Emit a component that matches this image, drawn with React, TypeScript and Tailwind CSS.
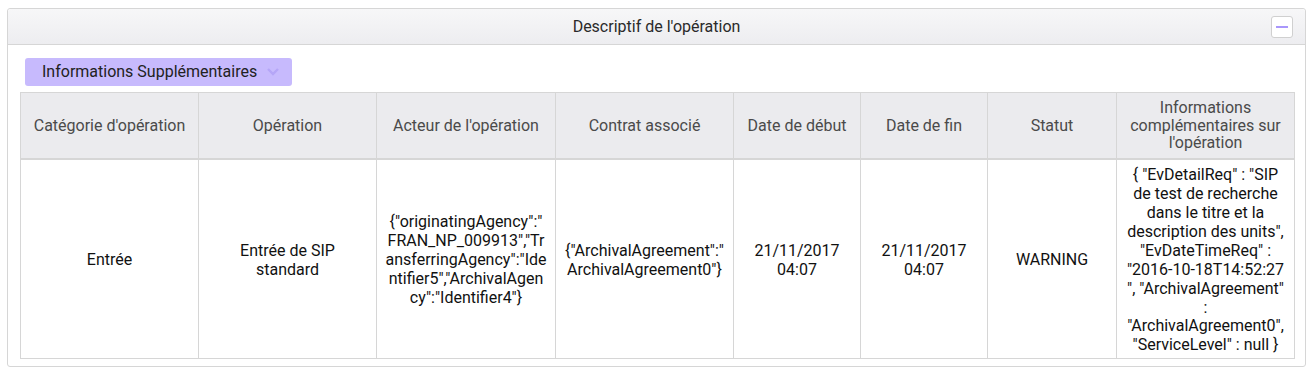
const headers = [
  "Catégorie d'opération",
  "Opération",
  "Acteur de l'opération",
  "Contrat associé",
  "Date de début",
  "Date de fin",
  "Statut",
  "Informations complémentaires sur l'opération",
]

const widths = ["w-[178px]", "w-[178px]", "w-[179px]", "w-[178px]", "w-[127px]", "w-[127px]", "w-[129px]", "w-[178px]"]

// Chaque cellule est découpée en lignes, comme dans la capture d'origine
const row: string[][] = [
  ["Entrée"],
  ["Entrée de SIP", "standard"],
  [
    '{"originatingAgency":"',
    'FRAN_NP_009913","Tr',
    'ansferringAgency":"Ide',
    'ntifier5","ArchivalAgen',
    'cy":"Identifier4"}',
  ],
  ['{"ArchivalAgreement":"', 'ArchivalAgreement0"}'],
  ["21/11/2017", "04:07"],
  ["21/11/2017", "04:07"],
  ["WARNING"],
  [
    '{ "EvDetailReq" : "SIP',
    "de test de recherche",
    "dans le titre et la",
    'description des units",',
    '"EvDateTimeReq" :',
    '"2016-10-18T14:52:27',
    '", "ArchivalAgreement"',
    ":",
    '"ArchivalAgreement0",',
    '"ServiceLevel" : null }',
  ],
]

export default function App() {
  return (
    <div className="w-[1313px] h-[374px] bg-white pt-2 px-[7px] font-['Roboto',sans-serif] text-[16px]">
      <div className="w-[1299px] border border-[#d6d6d6] rounded-[3px] bg-white">

        {/* ── En-tête du panneau ── */}
        <div className="relative h-9 flex items-center justify-center bg-gradient-to-b from-[#f7f7f8] to-[#ededf0] border-b border-[#d6d6d6] text-[#2a2a2a] rounded-t-[3px]">
          <span>Descriptif de l'opération</span>
          <button className="absolute right-[12px] top-[7px] w-[22px] h-[22px] bg-white border border-[#d0d0d0] rounded-[3px] flex items-center justify-center">
            <span className="block w-[12px] h-[2px] bg-[#a997fb]" />
          </button>
        </div>

        {/* ── Corps ── */}
        <div className="pl-[12px] pt-[13px] pb-[7px]">
          <button className="ml-[5px] h-[28px] w-[267px] pl-[17px] flex items-center gap-[9px] bg-[#c7bafd] rounded-[3px] text-[#222]">
            Informations Supplémentaires
            <svg width="14" height="10" viewBox="0 0 14 10" aria-hidden="true">
              <polyline points="2,2 7,7 12,2" fill="none" stroke="#b5a6f7" strokeWidth="2.4" />
            </svg>
          </button>

          <table className="mt-[6px] border-collapse table-fixed w-[1274px]">
            <thead>
              <tr className="bg-[#ebebee]">
                {headers.map((h, i) => (
                  <th
                    key={i}
                    className={`${widths[i]} h-[66px] border border-[#d6d6d6] border-b-2 px-[8px] font-normal text-[#4a4a4a] leading-[17.5px] text-center`}
                  >
                    {h}
                  </th>
                ))}
              </tr>
            </thead>
            <tbody>
              <tr>
                {row.map((lines, i) => (
                  <td
                    key={i}
                    className="h-[200px] border border-[#d6d6d6] px-[4px] pt-[4px] text-center align-middle text-[#111] leading-[18.9px]"
                  >
                    {lines.map((l, j) => (
                      <span key={j} className="block whitespace-nowrap">{l}</span>
                    ))}
                  </td>
                ))}
              </tr>
            </tbody>
          </table>
        </div>
      </div>
    </div>
  )
}
